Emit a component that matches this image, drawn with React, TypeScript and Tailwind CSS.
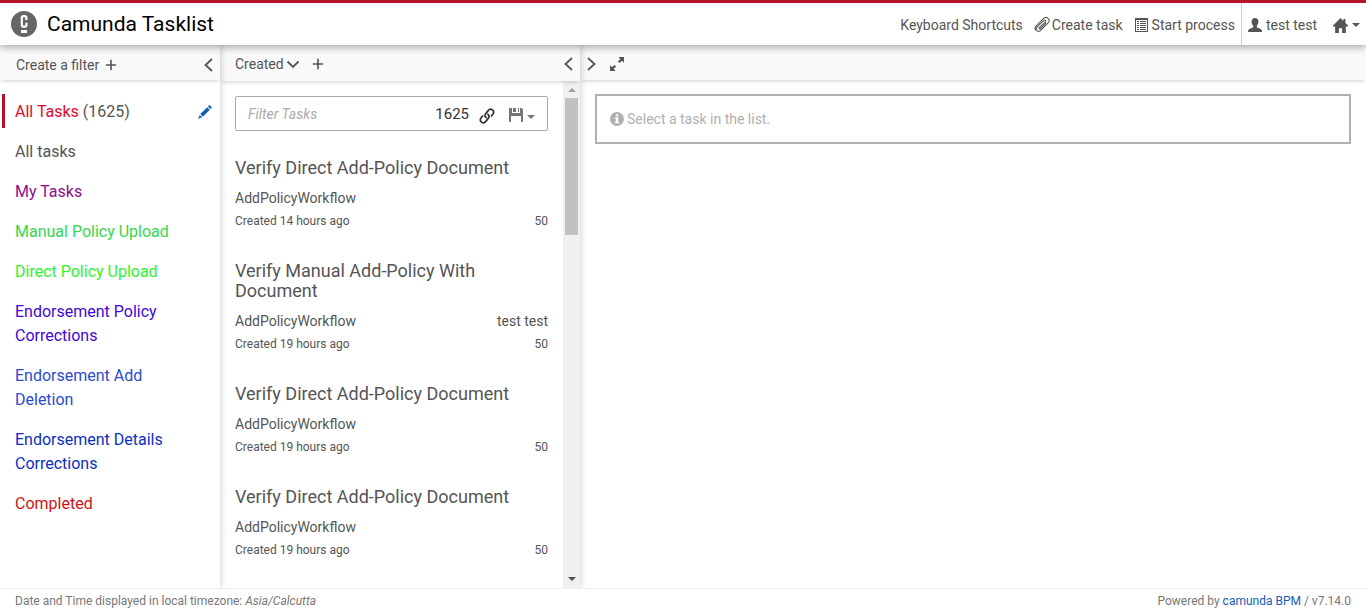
import type { ReactNode } from "react";

function Icon({ children, className = "size-3.5" }: { children: ReactNode; className?: string }) {
  return (
    <svg viewBox="0 0 14 14" className={`${className} shrink-0`} fill="currentColor" aria-hidden="true">
      {children}
    </svg>
  );
}

const Stroke = ({ d, width = 1.2 }: { d: string; width?: number }) => (
  <path d={d} fill="none" stroke="currentColor" strokeWidth={width} />
);

const Paperclip = () => (
  <Icon className="size-4">
    <Stroke
      width={0.9}
      d="M4.2 9.9 9.9 4.2a.9.9 0 0 0-1.3-1.3L2.6 8.9a2.1 2.1 0 0 0 3 3L12.3 5.2a2.7 2.7 0 0 0-3.9-3.9L2 7.7a3.1 3.1 0 0 0-.4 4M4.2 9.9a.9.9 0 0 0 1.3.4L10.6 5.2"
    />
  </Icon>
);
const ListAlt = () => (
  <Icon>
    <path fillRule="evenodd" d="M0 0h13v14H0zM1 2v11h11V2z" />
    <path d="M2 3h2v1H2zM5 3h6v1H5zM2 5h2v1H2zM5 5h6v1H5zM2 7h2v1H2zM5 7h6v1H5zM2 9h2v1H2zM5 9h6v1H5zM2 11h2v1H2zM5 11h6v1H5z" />
  </Icon>
);
const User = () => (
  <Icon>
    <path d="M7 0c2.3 0 3.5 1.4 3.4 3.7 0 1.8-.7 3-1.5 3.9v1.3c0 .6 1 .9 2.1 1.3 2 .8 3.1 1.3 3.1 3.8H0c0-2.5 1.1-3 3.1-3.8 1.100-.4 2.1-.7 2.100-1.3V7.600C4.300 6.700 3.600 5.500 3.600 3.700 3.500 1.400 4.700 0 7 0z" />
  </Icon>
);
const Home = () => (
  <Icon className="size-[15px]">
    <path d="M7 0l2.700 2.700V1h1.900v3.600L14 7v1h-2v6H8.500V9.500h-3V14H2V8H0V7z" />
  </Icon>
);
const Pencil = () => (
  <Icon>
    <path d="M10.800.6c.4-.4.9-.4 1.300 0l1.300 1.300c.4.4.4.9 0 1.300l-.9.900L9.900 1.500zM9.200 2.200l2.600 2.600-6.900 6.900-2.600-2.600zM1.700 9.900l2.400 2.400L.1 13.900z" />
  </Icon>
);
const Floppy = () => (
  <Icon>
    <path d="M0 0h3v5h8V0h1.500L14 1.500V14h-2V8H2v6H0zM4 0h3v4H4zM9 0h1v4H9z" />
  </Icon>
);
const Chain = () => (
  <Icon className="size-4">
    <Stroke width={1.5} d="M6.8 8.6C5.2 8.2 4.7 6.6 5.7 5.3L8 2.3C9.1 1 10.7.8 11.8 1.7s1.2 2.5.3 3.7L10.5 7.4" />
    <Stroke width={1.5} d="M7.2 5.4C8.8 5.8 9.3 7.4 8.3 8.7L6 11.7C4.9 13 3.3 13.2 2.2 12.3S1 9.8 1.9 8.6L3.5 6.6" />
  </Icon>
);
const Resize = () => (
  <Icon>
    <path d="M8.300 0H14v5.700L12 3.700 9.600 6.100 7.900 4.400 10.300 2zM0 8.300l2 2 2.400-2.400 1.700 1.700L3.700 12l2 2H0z" />
  </Icon>
);
const Info = () => (
  <Icon>
    <path fillRule="evenodd" d="M7 0a7 7 0 1 1 0 14A7 7 0 0 1 7 0zM5.900 2.200v2h2.300v-2zM4.700 5.300v1.100h1.100v3.700H4.700v1.200h4.700v-1.200H8.200V5.300z" />
  </Icon>
);
const Plus = () => (
  <Icon className="size-3">
    <Stroke width={1.9} d="M7 1v12M1 7h12" />
  </Icon>
);
const Chevron = ({ d }: { d: string }) => (
  <Icon>
    <Stroke width={1.8} d={d} />
  </Icon>
);
const LEFT = "M10 1 3.500 7l6.500 6";
const RIGHT = "M4 1l6.500 6L4 13";
const DOWN = "M1.500 4.500 7 10l5.500-5.500";
const Caret = ({ className = "" }: { className?: string }) => (
  <svg viewBox="0 0 8 4" className={`h-1 w-2 shrink-0 ${className}`} fill="currentColor" aria-hidden="true">
    <path d="M0 0h8L4 4z" />
  </svg>
);

const filters = [
  { name: "All tasks", color: "text-[#555555]" },
  { name: "My Tasks", color: "text-[#920b8e]" },
  { name: "Manual Policy Upload", color: "text-[#34d84c]" },
  { name: "Direct Policy Upload", color: "text-[#2cf52c]" },
  { name: "Endorsement Policy Corrections", color: "text-[#4008d6]" },
  { name: "Endorsement Add Deletion", color: "text-[#2b4ad0]" },
  { name: "Endorsement Details Corrections", color: "text-[#0c2fc0]" },
  { name: "Completed", color: "text-[#d01414]" },
];

const tasks = [
  { name: "Verify Direct Add-Policy Document", age: "14 hours ago", assignee: "" },
  { name: "Verify Manual Add-Policy With Document", age: "19 hours ago", assignee: "test test" },
  { name: "Verify Direct Add-Policy Document", age: "19 hours ago", assignee: "" },
  { name: "Verify Direct Add-Policy Document", age: "19 hours ago", assignee: "" },
];

const bar = "flex shrink-0 items-center bg-[#f9f9f9] shadow-[0_3px_4px_-2px_rgba(0,0,0,0.2)]";

export default function App() {
  return (
    <div className="flex h-screen flex-col overflow-hidden bg-white font-['Roboto','Noto_Sans',sans-serif] text-sm text-[#555555]">
      <header className="relative z-30 flex h-[45px] shrink-0 items-stretch border-t-[3px] border-[#b5152b] bg-white shadow-[0_2px_8px_rgba(0,0,0,0.35)]">
        <a href="#home" className="flex items-center gap-2.5 pl-[11px] text-[21px] text-black">
          <svg viewBox="0 0 26 26" className="size-[26px]" aria-hidden="true">
            <circle cx="13" cy="13" r="13" fill="#666" />
            <path d="M15.4 9V6.800q0-1.700-1.700-1.700h-1.200q-1.700 0-1.700 1.700v7.100q0 1.700 1.700 1.700h1.200q1.700 0 1.700-1.700v-2.200" fill="none" stroke="#fff" strokeWidth="2.2" />
            <path d="M10 19h6v3h-6z" fill="#fff" />
          </svg>
          <h1>Camunda Tasklist</h1>
        </a>
        <nav className="ml-auto flex items-stretch pt-0.5">
          <button type="button" className="pr-[11px]">Keyboard Shortcuts</button>
          <button type="button" className="flex items-center gap-0.5 pr-3"><Paperclip />Create task</button>
          <button type="button" className="flex items-center gap-[3px] pr-1.5"><ListAlt />Start process</button>
          <button type="button" className="-mt-0.5 flex items-center gap-1 border-l border-[#d0d0d0] pt-0.5 pr-4 pl-1.5"><User />test test</button>
          <button type="button" aria-label="Applications" className="flex items-center gap-1 pr-1.5"><Home /><Caret /></button>
        </nav>
      </header>

      <main className="flex min-h-0 flex-1">
        <section aria-label="Filters" className="relative z-20 w-[220px] shrink-0 bg-white shadow-[1px_0_7px_rgba(0,0,0,0.18)]">
          <div className={`${bar} h-[35px] justify-between pt-1 pr-1 pl-4`}>
            <button type="button" className="flex items-center gap-1.5">Create a filter <Plus /></button>
            <button type="button" aria-label="Collapse filters"><Chevron d={LEFT} /></button>
          </div>
          <ul className="flex flex-col gap-1.5 pt-3.5 text-base">
            <li className="ml-0.5 flex items-center justify-between border-l-[3px] border-[#b5152b] pt-1.5 pr-2 pb-1 pl-2.5">
              <a href="#all"><span className="text-[#e10b2f]">All Tasks</span> (1625)</a>
              <button type="button" aria-label="Edit filter" className="text-[#155cb5]"><Pencil /></button>
            </li>
            {filters.map((f) => (
              <li key={f.name} className="pt-1.5 pr-10 pb-1 pl-[15px]">
                <a href="#filter" className={`block ${f.color}`}>{f.name}</a>
              </li>
            ))}
          </ul>
        </section>

        <section aria-label="Tasks" className="relative z-10 flex w-[360px] shrink-0 flex-col bg-white shadow-[1px_0_7px_rgba(0,0,0,0.18)]">
          <div className={`${bar} z-10 h-9 gap-3 pt-0.5 pr-1 pl-[15px]`}>
            <button type="button" className="flex items-center gap-0.5">Created<Chevron d={DOWN} /></button>
            <button type="button" aria-label="Add sorting"><Plus /></button>
            <button type="button" aria-label="Collapse tasks" className="ml-auto"><Chevron d={LEFT} /></button>
          </div>
          <div className="flex min-h-0 flex-1">
            <div className="flex-1 overflow-hidden px-[15px] pt-[15px]">
              <div className="flex h-[35px] items-center rounded-xs border border-[#aaaaaa] px-3 text-[#333333]">
                <input aria-label="Filter Tasks" placeholder="Filter Tasks" className="min-w-0 flex-1 outline-none placeholder:text-[#aaaaaa] placeholder:italic" />
                <span className="pt-0.5 pr-2.5 text-[15px]">1625</span>
                <button type="button" aria-label="Copy link" className="pt-1"><Chain /></button>
                <button type="button" aria-label="Save filter" className="ml-3.5 flex items-center gap-1 pt-0.5 text-[#777777]"><Floppy /><Caret className="mt-1" /></button>
              </div>
              <ul className="pt-[27px]">
                {tasks.map((t, i) => (
                  <li key={i} className="pb-[29px]">
                    <h2 className="pb-2.5 text-lg leading-5">{t.name}</h2>
                    <p className="flex justify-between leading-5"><span>AddPolicyWorkflow</span><span>{t.assignee}</span></p>
                    <p className="flex justify-between pt-[3px] text-xs leading-[21px]"><span>Created {t.age}</span><span>50</span></p>
                  </li>
                ))}
              </ul>
            </div>
            <div aria-hidden="true" className="flex w-[17px] flex-col items-center bg-[#f0f0f0] py-[7px]">
              <Caret className="rotate-180 text-[#a0a0a0]" />
              <div className="mt-1.5 h-[137px] w-[13px] bg-[#c1c1c1]" />
              <Caret className="mt-auto text-[#505050]" />
            </div>
          </div>
        </section>

        <section aria-label="Task details" className="min-w-0 flex-1">
          <div className={`${bar} h-[35px] gap-3 pt-[3px] pl-1`}>
            <button type="button" aria-label="Expand tasks"><Chevron d={RIGHT} /></button>
            <button type="button" aria-label="Maximize"><Resize /></button>
          </div>
          <p className="mx-[15px] mt-3.5 flex items-center gap-[3px] border-2 border-[#b0b0b0] p-[13px] text-[#b0b0b0]">
            <Info />Select a task in the list.
          </p>
        </section>
      </main>

      <footer className="relative z-30 flex h-6 shrink-0 items-center justify-between border-t border-[#eeeeee] bg-white px-[15px] text-xs text-[#777777]">
        <p>Date and Time displayed in local timezone: <em>Asia/Calcutta</em></p>
        <p>Powered by <a href="#camunda" className="text-[#155cb5]">camunda BPM</a> / v7.14.0</p>
      </footer>
    </div>
  );
}
